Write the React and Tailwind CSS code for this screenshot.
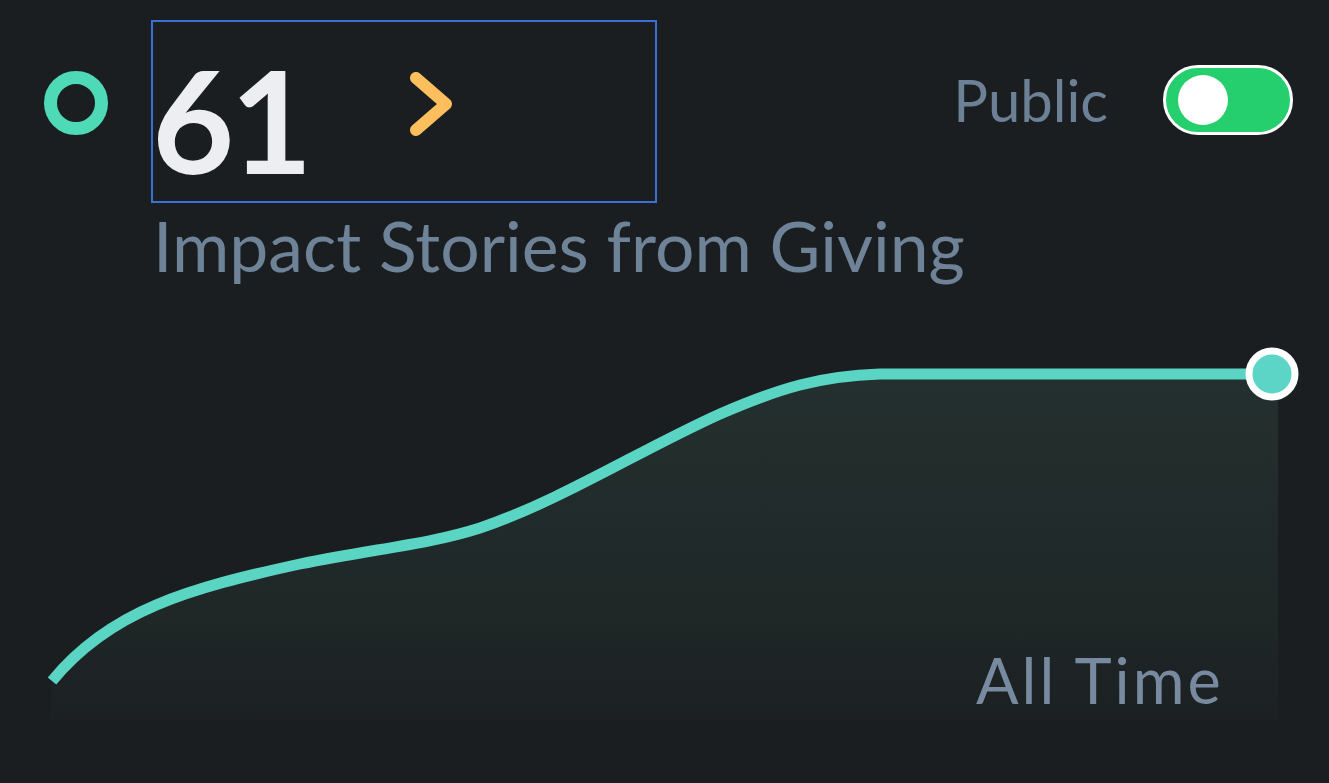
import React from 'react'

const linePath = 'M52,683 C110,612 190,590 300,566 C380,550 430,546 480,530 C560,503 640,452 720,416 C780,390 820,378 880,376 L1272,376'
const fillPath = linePath + ' L1278,376 L1278,722 L50,722 Z'

function Toggle() {
  return (
    <div className="w-[130px] h-[70px] rounded-full border-[3px] border-white bg-[#26cf6d] flex items-center pl-[12px]">
      <div className="w-[50px] h-[50px] rounded-full bg-white" />
    </div>
  )
}

function Chart() {
  return (
    <svg width="1329" height="430" viewBox="0 330 1329 430" className="block">
      <defs>
        <linearGradient id="area" x1="0" y1="376" x2="0" y2="722" gradientUnits="userSpaceOnUse">
          <stop offset="0" stopColor="#24302f" />
          <stop offset="0.7" stopColor="#1f2727" />
          <stop offset="1" stopColor="#1c2022" />
        </linearGradient>
      </defs>
      <path d={fillPath} fill="url(#area)" />
      <path d={linePath} fill="none" stroke="#5ad5c4" strokeWidth="11" strokeLinecap="butt" />
      <circle cx="1272" cy="376" r="23" fill="#5dd5c6" stroke="#ffffff" strokeWidth="7" />
    </svg>
  )
}

export default function App() {
  return (
    <div className="w-[1329px] h-[783px] bg-[#1b1e20] overflow-hidden relative" style={{ fontFamily: 'Lato, "Open Sans", sans-serif' }}>
      <div className="flex items-start pl-[44px] pt-[20px] pr-[36px]">
        <div className="w-[64px] h-[64px] rounded-full border-[13px] border-[#4ed9b7] mt-[51px] shrink-0" />
        <div className="ml-[43px] w-[506px] h-[183px] border-2 border-[#3b6fd6] flex items-start">
          <span className="text-[142px] leading-none font-bold text-[#eceef2] mt-[26px] ml-[-1px] tracking-[-4px]">61</span>
          <svg width="50" height="66" viewBox="0 0 50 66" className="ml-[97px] mt-[49px]">
            <path d="M10,7 L40,33 L10,59" fill="none" stroke="#fdbf5d" strokeWidth="12" strokeLinecap="round" strokeLinejoin="round" />
          </svg>
        </div>
        <div className="ml-auto flex items-center gap-[55px] mt-[45px]">
          <span className="text-[58px] leading-none text-[#6c8096]">Public</span>
          <Toggle />
        </div>
      </div>
      <div className="pl-[153px] mt-[8px] text-[69.7px] leading-none text-[#6e8298]">Impact Stories from Giving</div>
      <div className="mt-[47px] relative">
        <Chart />
        <span className="absolute left-[976px] top-[320px] text-[63px] leading-none tracking-[3px] text-[#778a9f]">All Time</span>
      </div>
    </div>
  )
}
